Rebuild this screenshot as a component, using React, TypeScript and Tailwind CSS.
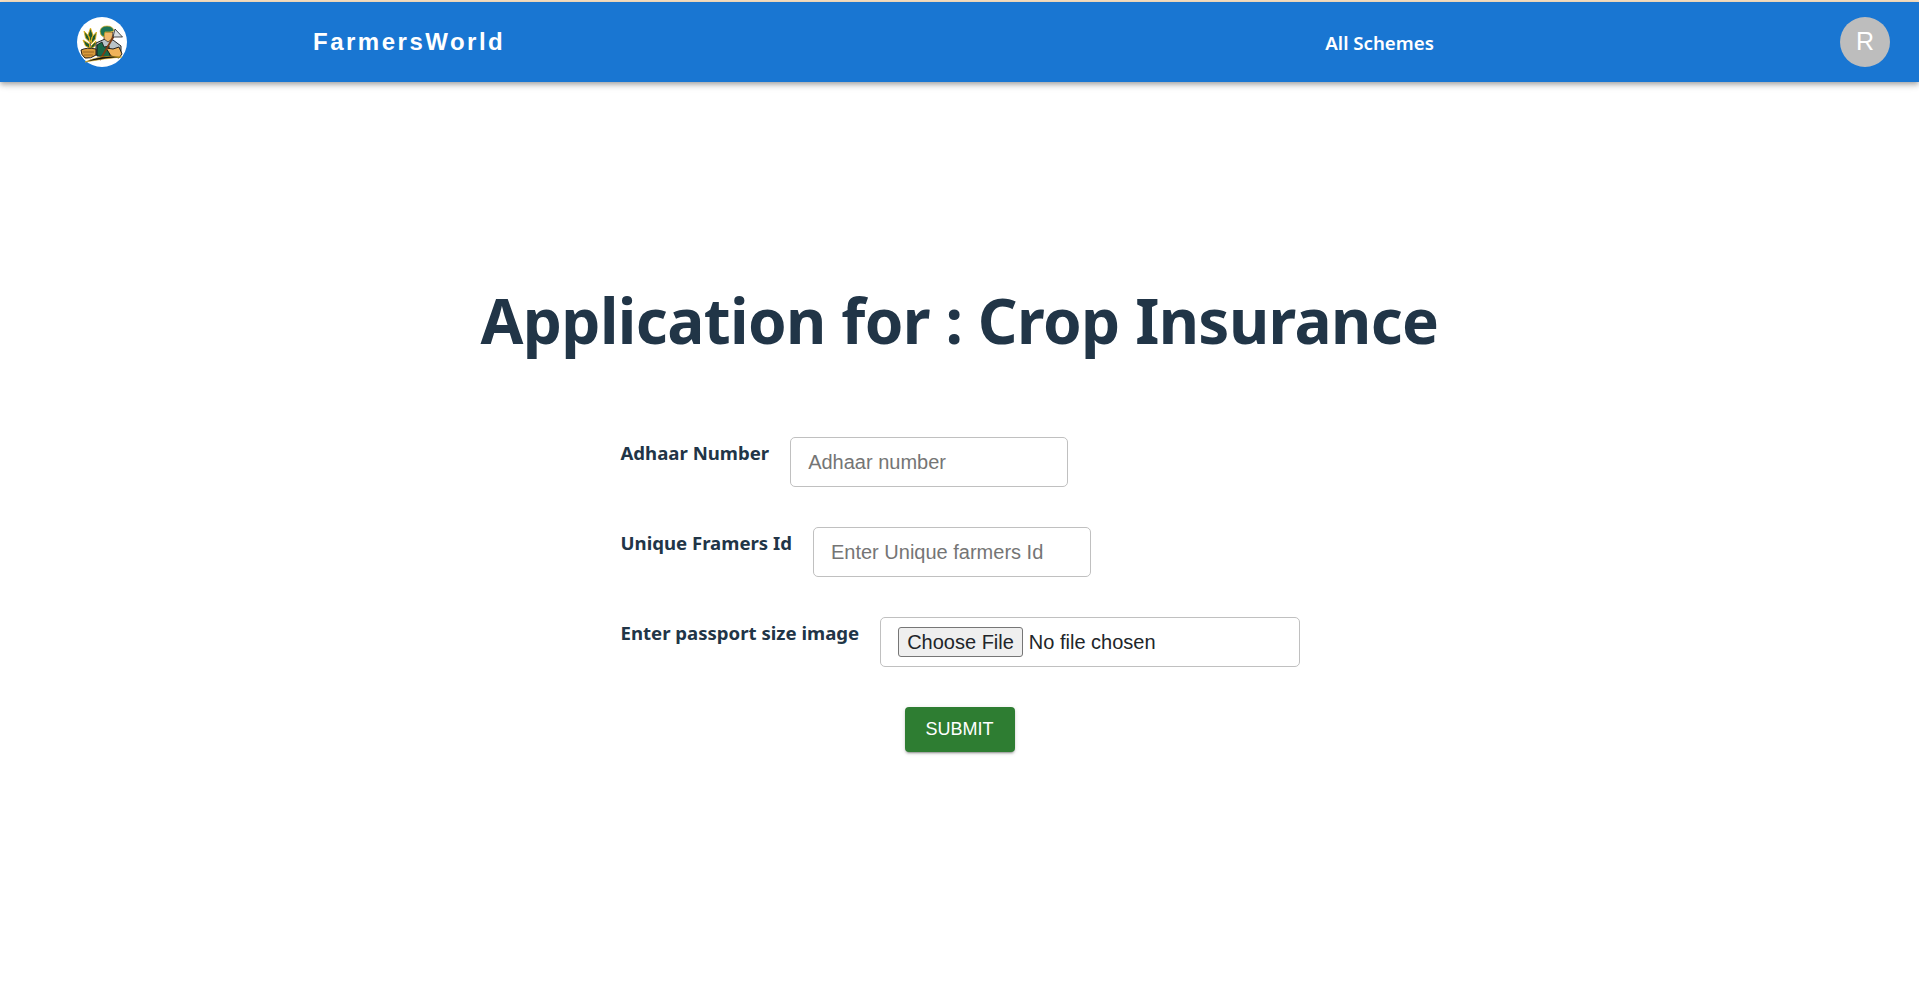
import React from "react";

const Logo = () => (
  <svg viewBox="0 0 50 50" className="w-full h-full">
    <circle cx="25" cy="25" r="25" fill="#fff" />
    {/* plant */}
    <path d="M13 32 L13.5 14" stroke="#1a1a1a" strokeWidth="1" fill="none" />
    <path d="M13.5 11 L16 18 L13.5 25 L11 18 Z M7 14 L12.5 20 L12.5 25 L8.5 21 Z M19.5 15 L18.5 22 L14 27 L15 20 Z M6 23 L12.5 27 L12.5 31 L8.5 29 Z M19 24 L14 29 L14 32 L18 29 Z" fill="#1f5a30" stroke="#e2b21c" strokeWidth="0.9" />
    {/* body */}
    <path d="M19 26 L28 22 L36 23 L44 29 L44 36 L30 40 L19 38 Z" fill="#b9c3c8" stroke="#111" strokeWidth="0.9" />
    <path d="M20 28 L25 25 L27 30 L32 29 L33 40 L20 39 Z" fill="#17694a" stroke="#111" strokeWidth="0.8" />
    {/* arm */}
    <path d="M29 31 L36 32 L42 30 L45 37 L42 41 L34 39 Z" fill="#f0b35a" stroke="#111" strokeWidth="0.9" />
    {/* head */}
    <path d="M27 15 L36 15 L35 22 L31 25 L27 22 Z" fill="#efb768" stroke="#111" strokeWidth="0.6" />
    <path d="M23 14 Q24 9 30 9 Q36 9 37 14 L33 15 L28 15 L27 20 Q23 19 23 14 Z" fill="#1b7457" stroke="#e2b21c" strokeWidth="0.7" />
    {/* hoe */}
    <path d="M38 17 L23 43" stroke="#7a3b12" strokeWidth="1.8" />
    <path d="M38 12 L45.5 20 L36 20 Z" fill="#d8dde0" stroke="#222" strokeWidth="0.8" />
    {/* basket */}
    <path d="M4 33 Q10 30 19 32 L19 38 Q14 42 8 41 Q4 38 4 33 Z" fill="#d99a3c" stroke="#111" strokeWidth="0.9" />
    <path d="M6 35 L17 35 M7 38 L16 38" stroke="#8a5a1c" strokeWidth="0.8" />
    {/* ground */}
    <path d="M8 45 Q24 37 45 40 Q28 41.5 8 45 Z" fill="#111" stroke="#e2b21c" strokeWidth="0.6" />
  </svg>
);

const Field = ({ label, children }: { label: string; children: React.ReactNode }) => (
  <div className="flex items-start mb-10">
    <label className="ml-px mr-[21px] shrink-0 whitespace-nowrap text-[18.6px] font-bold leading-[32px] text-[#213547] font-['Noto_Sans',sans-serif]">
      {label}
    </label>
    {children}
  </div>
);

const inputClass =
  "h-[50px] shrink-0 border border-[#c0c0c0] rounded-[5px] bg-white px-[17px] text-xl text-[#212529] placeholder:text-[#757575] font-['Liberation_Sans',sans-serif]";

export default function App() {
  return (
    <div className="min-h-[984px] bg-white">
      <div className="h-[2px] bg-[#fbe3c4]" />

      <header className="flex items-center h-20 pl-[77px] pr-[29px] bg-[#1976d2] shadow-[0_2px_4px_-1px_rgba(0,0,0,0.2),0_4px_5px_0_rgba(0,0,0,0.14),0_1px_10px_0_rgba(0,0,0,0.12)]">
        <div className="w-[50px] h-[50px] shrink-0">
          <Logo />
        </div>
        <span className="ml-[186px] text-2xl font-bold tracking-[2.5px] text-white font-['Liberation_Sans',sans-serif]">
          FarmersWorld
        </span>
        <a className="ml-[820px] mt-[2px] text-[18.7px] font-semibold text-white font-['Noto_Sans',sans-serif]">All Schemes</a>
        <div className="ml-auto w-[50px] h-[50px] rounded-full bg-[#bdbdbd] flex items-center justify-center text-[25px] text-white font-['Liberation_Sans',sans-serif]">
          R
        </div>
      </header>

      <main className="flex flex-col items-center pt-[190px]">
        <h1 className="text-[62px] leading-[96px] font-bold tracking-[-0.6px] text-[#213547] font-['Noto_Sans',sans-serif]">
          Application for : Crop Insurance
        </h1>

        <form className="w-[680px] mt-[69px] flex flex-col">
          <Field label="Adhaar Number">
            <input type="text" placeholder="Adhaar number" className={`${inputClass} w-[278px]`} />
          </Field>
          <Field label="Unique Framers Id">
            <input type="text" placeholder="Enter Unique farmers Id" className={`${inputClass} w-[278px]`} />
          </Field>
          <Field label="Enter passport size image">
            <input
              type="file"
              className="w-[420px] h-[50px] shrink-0 border border-[#c0c0c0] rounded-[5px] bg-white px-[17px] py-[9px] text-xl leading-[28px] text-[#212529] font-['Liberation_Sans',sans-serif] file:bg-[#efefef] file:border file:border-[#767676] file:rounded-[3px] file:px-2 file:mr-[6px]"
            />
          </Field>
          <button
            type="button"
            className="self-center w-[110px] h-[45px] pb-[2px] rounded bg-[#2e7d32] text-white text-lg font-['Liberation_Sans',sans-serif] shadow-[0_3px_1px_-2px_rgba(0,0,0,0.2),0_2px_2px_0_rgba(0,0,0,0.14),0_1px_5px_0_rgba(0,0,0,0.12)]"
          >
            SUBMIT
          </button>
        </form>
      </main>
    </div>
  );
}
